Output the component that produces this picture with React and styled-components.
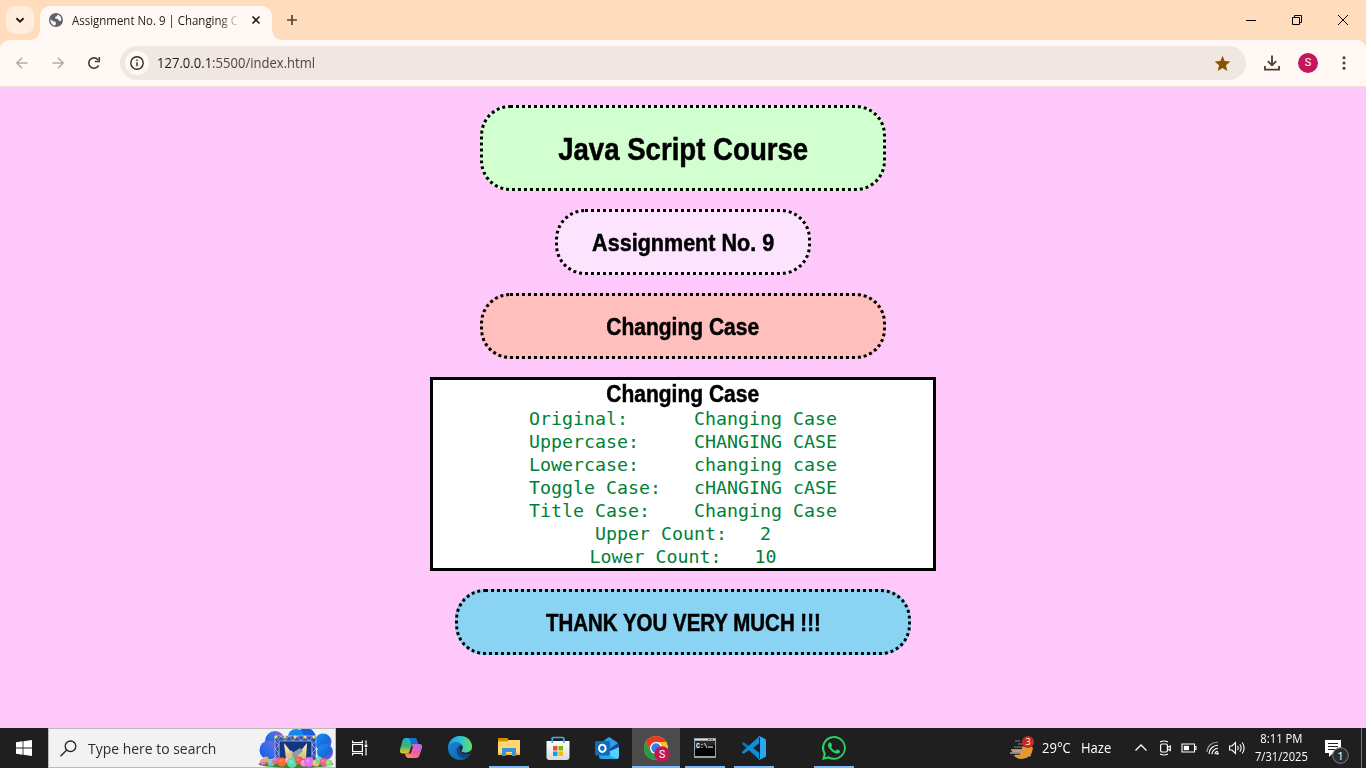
import React from "react";
import styled, { createGlobalStyle } from "styled-components";

const Global = createGlobalStyle`
  *, *::before, *::after { box-sizing: border-box; }
  html, body { margin: 0; padding: 0; overflow: hidden; }
  body { font-family: "Open Sans", "Noto Sans", sans-serif; }
  svg { display: block; flex: none; }
`;

const ui = '"Open Sans", "Noto Sans", sans-serif';

const Screen = styled.div`
  width: 1366px;
  height: 768px;
  display: flex;
  flex-direction: column;
  background: #ffc8fb;
`;

const Fit = styled.span`
  display: inline-block;
  white-space: pre;
  transform: scaleX(${(p) => p.$x || 1});
  transform-origin: ${(p) => p.$origin || "left"} center;
`;

/* ---------- browser window ---------- */
const TitleBar = styled.header`
  height: 40px;
  flex: none;
  display: flex;
  background: #ffdcbc;
  padding: 6px 0 0 6px;
`;

const TabSearch = styled.div`
  width: 28px;
  height: 28px;
  border-radius: 10px;
  background: #ffeddf;
  display: flex;
  align-items: center;
  justify-content: center;
`;

const Tab = styled.div`
  position: relative;
  width: 232px;
  height: 34px;
  margin-left: 6px;
  padding: 0 9px 6px 9px;
  display: flex;
  align-items: center;
  background: #fff8f5;
  border-radius: 10px 10px 0 0;
  &::before, &::after {
    content: "";
    position: absolute;
    bottom: 0;
    width: 10px;
    height: 10px;
  }
  &::before {
    left: -10px;
    background: radial-gradient(circle at 0 0, transparent 9.5px, #fff8f5 10px);
  }
  &::after {
    right: -10px;
    background: radial-gradient(circle at 100% 0, transparent 9.5px, #fff8f5 10px);
  }
`;

const TabTitle = styled.div`
  width: 167px;
  margin: 1px 0 0 9px;
  overflow: hidden;
  white-space: nowrap;
  font: 12px/18px ${ui};
  color: #251a12;
  mask-image: linear-gradient(to right, #000 147px, transparent 168px);
`;

const TabClose = styled.div`
  margin-left: auto;
  width: 14px;
  display: flex;
  justify-content: center;
`;

const NewTab = styled.div`
  width: 28px;
  height: 28px;
  margin-left: 6px;
  display: flex;
  align-items: center;
  justify-content: center;
`;

const WindowButtons = styled.div`
  margin: -6px 0 0 auto;
  display: flex;
`;

const WindowButton = styled.div`
  width: 46px;
  height: 40px;
  display: flex;
  align-items: center;
  justify-content: center;
`;

const ToolbarBack = styled.div`
  flex: none;
  background: #ffdcbc;
`;

const Toolbar = styled.div`
  height: 47px;
  display: flex;
  align-items: center;
  background: #fff8f5;
  border-radius: 9px 9px 0 0;
  border-bottom: 1px solid #f5dfd4;
  padding: 0 4px;
`;

const ToolButton = styled.div`
  width: 36px;
  height: 36px;
  display: flex;
  align-items: center;
  justify-content: center;
`;

const AddressBar = styled.div`
  flex: 1;
  height: 34px;
  margin: 0 8px 0 8px;
  border-radius: 17px;
  background: #f0e7e2;
  padding: 0 15px 0 5px;
  display: flex;
  align-items: center;
`;

const SiteInfo = styled.div`
  width: 24px;
  height: 24px;
  border-radius: 50%;
  background: #fff8f5;
  display: flex;
  align-items: center;
  justify-content: center;
`;

const Url = styled.div`
  margin-left: 8px;
  flex: 1;
  font: 14px/20px ${ui};
  color: #51443b;
  b { font-weight: 400; color: #201a17; }
`;

const Avatar = styled.div`
  width: 20px;
  height: 20px;
  border-radius: 50%;
  background: #c2185b;
  color: #fff;
  font: 11px/20px Roboto, sans-serif;
  text-align: center;
`;

/* ---------- web page ---------- */
const Page = styled.main`
  flex: 1;
  display: flex;
  flex-direction: column;
  align-items: center;
  gap: 18px;
  padding-top: 18px;
  background: #ffc8fb;
`;

const Pill = styled.div`
  width: ${(p) => p.$w}px;
  height: ${(p) => p.$h || 66}px;
  border: 3px dotted #000;
  border-radius: 30px;
  background: ${(p) => p.$bg};
  display: flex;
  align-items: center;
  justify-content: center;
`;

const Heading = styled.h2`
  margin: 0;
  padding-top: 2px;
  color: #000;
  font: bold ${(p) => p.$size || 23}px/25px "Liberation Sans", Arial, sans-serif;
  -webkit-text-stroke: 0.5px #000;
  text-align: center;
`;

const ResultBox = styled.section`
  width: 506px;
  height: 194px;
  border: 3px solid #000;
  background: #fff;
`;

const Results = styled.pre`
  margin: 0;
  text-align: center;
  color: #008037;
  font: 18.27px/23px "DejaVu Sans Mono", monospace;
`;

/* ---------- taskbar ---------- */
const Taskbar = styled.footer`
  height: 40px;
  flex: none;
  display: flex;
  background: #1f1f1f;
  color: #fff;
`;

const TaskButton = styled.div`
  position: relative;
  width: 48px;
  height: 40px;
  margin-left: ${(p) => p.$gap || 0}px;
  display: flex;
  align-items: center;
  justify-content: center;
  background: ${(p) => (p.$active ? "#4b4b4b" : "transparent")};
  &::after {
    content: "";
    position: absolute;
    left: ${(p) => (p.$active ? 0 : 4)}px;
    right: ${(p) => (p.$active ? 0 : 4)}px;
    bottom: 0;
    height: 2px;
    background: ${(p) => (p.$open || p.$active ? "#76b9ff" : "transparent")};
  }
`;

const SearchBox = styled.div`
  width: 288px;
  height: 40px;
  border: 1px solid #b8bcb8;
  background: #f2f2f2;
  display: flex;
  align-items: center;
  padding-left: 11px;
`;

const SearchText = styled.div`
  margin-left: 11px;
  width: 170px;
  color: #2c2c2c;
  font: 15px/20px ${ui};
`;

const Weather = styled.div`
  width: 119px;
  margin-left: auto;
  display: flex;
  align-items: center;
`;

const WeatherText = styled.div`
  width: ${(p) => p.$w}px;
  margin-left: ${(p) => p.$gap}px;
  font: 14px/20px ${ui};
`;

const TrayItem = styled.div`
  width: 24px;
  display: flex;
  align-items: center;
  justify-content: center;
`;

const Clock = styled.div`
  width: 64px;
  display: flex;
  flex-direction: column;
  align-items: center;
  padding-top: 2px;
  font: 12px/18px ${ui};
`;

const Notifications = styled.div`
  width: 48px;
  padding: 5px 0 0 11px;
  display: flex;
  align-items: center;
`;

const ShowDesktop = styled.div`
  width: 5px;
  border-left: 1px solid #7a7a7a;
`;

/* ---------- icons ---------- */
const Line = ({ w = 16, h = w, box, color, sw = 1.5, children }) => (
  <svg width={w} height={h} viewBox={box || `0 0 ${w} ${h}`} fill="none" stroke={color} strokeWidth={sw}>
    {children}
  </svg>
);

const GlobeIcon = () => (
  <svg width="14" height="14" viewBox="0 0 14 14">
    <circle cx="7" cy="7" r="7" fill="#5f6368" />
    <path d="M1.5 6.2 4.6 8.6 6.6 8.7 6.9 10.6 6.1 12.6C3.3 12.2 1.2 9.6 1.5 6.2ZM8.3 1.6 8.2 3.2 6.4 3.7 6 5.3 7.2 5.8 9 5.9 9.7 7.6 11 8.2 12.4 7.2C12.6 4.4 10.8 2 8.3 1.6Z" fill="#fff8f5" />
  </svg>
);

const StartIcon = () => (
  <svg width="16" height="16" viewBox="0 0 16 16" fill="#fff">
    <path d="M0 2.2 6.6 1.3V7.6H0ZM7.4 1.2 16 0V7.6H7.4ZM0 8.4H6.6V14.7L0 13.8ZM7.4 8.4H16V16L7.4 14.8Z" />
  </svg>
);

const balloons = [
  [5, 33, 3, "#e27ab7"], [8, 30.500, 3, "#f5a15d"], [13, 34, 3.500, "#6cc8b8"], [18, 31.500, 3.500, "#ee5f9e"],
  [24, 33, 4.500, "#ff6a2e"], [30, 31, 3, "#f7a1cb"], [34, 34, 5, "#54dfa4"], [41, 31.500, 4, "#f9564b"],
  [46, 34, 3.500, "#ff8bd7"], [51, 33, 5, "#e56cf2"], [58, 34, 3.500, "#ffb56a"], [61, 31, 3.500, "#66d89d"],
  [66, 33, 4, "#f55c8a"], [71, 34, 3.500, "#8fdc80"],
];

const StageArt = () => (
  <svg width="76" height="39" viewBox="0 0 76 39">
    <defs>
      <linearGradient id="puff" x1="0" y1="1" x2="1" y2="0">
        <stop offset="0" stopColor="#0b58e8" />
        <stop offset=".6" stopColor="#3f70e8" />
        <stop offset="1" stopColor="#c44fc2" />
      </linearGradient>
      <linearGradient id="puff2" x1="0" y1="0" x2="1" y2="1">
        <stop offset="0" stopColor="#1497f5" />
        <stop offset=".6" stopColor="#1768dd" />
        <stop offset="1" stopColor="#b34dc8" />
      </linearGradient>
      <linearGradient id="beam" x1="0" y1="0" x2="0" y2="1">
        <stop offset="0" stopColor="#fff7cf" />
        <stop offset="1" stopColor="#d6b668" />
      </linearGradient>
    </defs>
    <ellipse cx="38" cy="35" rx="37.500" ry="4" fill="#4e7b36" />
    <circle cx="17" cy="12" r="10" fill="url(#puff)" />
    <circle cx="11" cy="21" r="9.500" fill="url(#puff)" />
    <circle cx="48" cy="9" r="10" fill="#125fe0" />
    <circle cx="38" cy="8" r="8" fill="#1389ee" />
    <circle cx="65" cy="13" r="8.500" fill="url(#puff2)" />
    <circle cx="67" cy="23" r="8" fill="url(#puff2)" />
    <path d="M17 7H58V31H17Z" fill="#2d51a8" />
    <path d="M22 12H53V30H22Z" fill="#16357f" />
    <g stroke="#b5c6f5" strokeWidth=".7" fill="none">
      <path d="M17 7H58M21 12H54M17 7V30M21 12V30M58 7V30M54 12V30" />
      <path d="m17 12 4 4-4 4 4 4-4 4M58 12l-4 4 4 4-4 4 4 4M19 12l4-5 4 5 4-5 4 5 4-5 4 5 4-5 4 5 4-5" />
    </g>
    <path d="m26 14 8 10-3 6h-3ZM49 14l-8 10 3 6h4Z" fill="url(#beam)" />
    <path d="m30 30 3-9 5 5 5-5 3 9Z" fill="#d5c58c" />
    <path d="m34 24 8-5 3 3-5 4-1 4h-4Z" fill="#929ba0" />
    <g fill="#ffd65c">
      {[18, 27, 37, 47, 56].map((x) => <circle key={x} cx={x} cy="8" r="1.6" />)}
    </g>
    {balloons.map(([x, y, r, c]) => (
      <g key={x}>
        <circle cx={x} cy={y} r={r} fill={c} />
        <circle cx={x - 1} cy={y - 1} r={r / 2.5} fill="#fff" opacity=".25" />
      </g>
    ))}
  </svg>
);

const CopilotIcon = () => (
  <svg width="24" height="24" viewBox="0 0 24 24">
    <defs>
      <linearGradient id="cpA" x1="0" y1="0" x2="0" y2="1">
        <stop offset="0" stopColor="#27a9e8" />
        <stop offset=".5" stopColor="#36b36f" />
        <stop offset="1" stopColor="#f2c722" />
      </linearGradient>
      <linearGradient id="cpB" x1=".8" y1="0" x2="0" y2="1">
        <stop offset="0" stopColor="#b06cf2" />
        <stop offset=".5" stopColor="#f0609b" />
        <stop offset="1" stopColor="#fc9a56" />
      </linearGradient>
    </defs>
    <path d="M7 2h8c2 0 2.600 1.300 3.200 3.200L19 8h-4c-1.600 0-2.200.8-2.700 2.300L10.800 15c-.6 1.600-1.300 2.400-3 2.400H3.500c-2.500 0-3-2-2.400-4.200l2.200-8C3.900 3 5 2 7 2Z" fill="url(#cpA)" />
    <path d="M8 2h7c2 0 2.600 1.300 3.200 3.200L19 8h-4c-1.200 0-1.900.4-2.400 1.400L11.300 5C10.700 3 9.800 2 8 2Z" fill="#1470cf" />
    <path d="M17 22H9.500c-2 0-2.700-1.300-3.200-3.200l-.5-1.400h2c1.700 0 2.500-.8 3-2.400l1.500-4.700C12.800 8.800 13.400 8 15 8h5.500c2.500 0 3 2 2.400 4.200l-2.200 6.600C20 21 19 22 17 22Z" fill="url(#cpB)" />
    <path d="m12.300 10.300-2 6.300c-.3.700-.6.900-1.300.9h2.800l2.300-7.300Z" fill="#24202a" />
  </svg>
);

const EdgeIcon = () => (
  <svg width="24" height="24" viewBox="0 0 24 24">
    <defs>
      <linearGradient id="edA" x1="0" y1=".4" x2="1" y2=".4">
        <stop offset="0" stopColor="#1c9de0" />
        <stop offset=".5" stopColor="#2fc1d4" />
        <stop offset="1" stopColor="#66df5c" />
      </linearGradient>
      <linearGradient id="edB" x1="0" y1="0" x2="1" y2="1">
        <stop offset="0" stopColor="#1b8bdc" />
        <stop offset="1" stopColor="#0c59a4" />
      </linearGradient>
    </defs>
    <circle cx="12" cy="12" r="12" fill="url(#edB)" />
    <path d="M.3 10.500C1.200 4.500 6.200 0 12.200 0 19 0 24 4.800 24 10.400c0 3.900-3 6.300-6.300 6.300-3 0-4.700-1.200-4.500-2 .1-.5 1.400-1 1.400-3.100C14.600 8.500 11.700 6 7.900 6 4.500 6 1.700 7.700.3 10.500Z" fill="url(#edA)" />
    <path d="M13.200 14.700c-.2-.5 1.400-1 1.400-3.100 0-1-.4-2-1-2.800C10.600 9.200 8.600 11.700 8.700 14.800c.1 4.300 4.100 7.700 8.300 7.200 2.300-.9 4.200-2.400 5.500-4.600-1 .5-2.400.9-4 .9-3 0-5-1.400-5.300-3.600Z" fill="#14457f" />
    <path d="M13.200 14.700c-.2-.5 1.400-1 1.400-3.100 0-.8-.3-1.500-.6-2.100-1.500.5-2.400 2-2.100 3.800.6 3.200 3.600 5.300 7.300 5 1.600-.1 2.900-.6 3.600-1.300l1-3.400c-1.400 1.900-3.500 3.100-6.100 3.100-3 0-4.700-1.200-4.500-2Z" fill="#1f1f1f" />
  </svg>
);

const ExplorerIcon = () => (
  <svg width="22" height="20" viewBox="0 0 22 20">
    <path d="M0 2V1Q0 0 1 0H9L10.500 2H21Q22 2 22 3V17H0Z" fill="#f1b739" />
    <path d="M0 1Q0 0 1 0H9L10.300 2 9 3H0Z" fill="#d38c00" />
    <path d="M0 5 1 4H9L11 2H21Q22 2 22 3V17H0Z" fill="#ffd873" />
    <path d="M4 10.500Q4 10 5 10H17Q18 10 18 11V18H14V14H8V18H4Z" fill="#3c92d8" />
    <path d="M0 15H4V17H0ZM18 15H22V17H18ZM8 15H14V17H8Z" fill="#f5bd3d" />
  </svg>
);

const StoreIcon = () => (
  <svg width="24" height="24" viewBox="0 0 24 24">
    <defs>
      <linearGradient id="bag" x1="0" y1="0" x2="0" y2="1">
        <stop offset="0" stopColor="#fff" />
        <stop offset="1" stopColor="#d8d9da" />
      </linearGradient>
    </defs>
    <path d="M.5 5H23.500V21Q23.500 24 20.500 24H3.500Q.5 24 .5 21Z" fill="url(#bag)" />
    <path d="M6.200 7V2.500Q6.200 1.500 7.200 1.500H16.800Q17.800 1.500 17.800 2.500V7" fill="none" stroke="#2eb2ed" strokeWidth="1.700" />
    <path d="M7 10H11.500V14.500H7Z" fill="#f25022" /><path d="M12.500 10H17V14.500H12.500Z" fill="#7fba00" />
    <path d="M7 15.500H11.500V20H7Z" fill="#00a4ef" /><path d="M12.500 15.500H17V20H12.500Z" fill="#ffb900" />
  </svg>
);

const OutlookIcon = () => (
  <svg width="24" height="24" viewBox="0 0 24 24">
    <path d="M4 8 14 1.500 24 8V20Q24 23 21 23H7Q4 23 4 20Z" fill="#125fb6" />
    <path d="M6 7 13 1.500Q14 1 15 1.500L23 7 14 13Z" fill="#2d9fe8" />
    <path d="M23 7 12 16V20L24 12V8Z" fill="#1747a0" />
    <path d="M24 11V20Q24 23 21 23H8L11 17Z" fill="#55d0fa" />
    <path d="M5 15 22 23H7Q4 23 4 20Z" fill="#2aa7ed" />
    <rect x="0" y="5" width="15" height="14.500" rx="1.500" fill="#0f6cbd" />
    <ellipse cx="7.300" cy="12.300" rx="3.300" ry="3.600" fill="none" stroke="#fff" strokeWidth="2" />
  </svg>
);

const ChromeIcon = () => (
  <svg width="24" height="24" viewBox="0 2 24 24" overflow="visible">
    <circle cx="12" cy="14" r="12" fill="#fbc21b" />
    <path d="M1.600 8A12 12 0 0 1 22.400 8H12L6.800 17Z" fill="#e53c2f" />
    <path d="M1.600 8 6.800 17Q9 20 12 20L17.200 17 12 26A12 12 0 0 1 1.600 8Z" fill="#269a48" />
    <circle cx="12" cy="14" r="6" fill="#fff" />
    <circle cx="12" cy="14" r="4.700" fill="#347ce8" />
    <circle cx="18" cy="20" r="7.800" fill="#c2185b" />
    <text x="18" y="23.800" textAnchor="middle" fill="#fff" fontFamily="Roboto, sans-serif" fontSize="10.500">S</text>
  </svg>
);

const TerminalIcon = () => (
  <svg width="22" height="20" viewBox="0 0 22 20">
    <path d="M0 0H22V20H0Z" fill="#9aa0a4" />
    <path d="M1 1H21V2H1Z" fill="#dce3e8" />
    <path d="M14 1H16V2H14ZM17 1H19V2H17Z" fill="#59636d" />
    <path d="M1 3H21V18H1Z" fill="#050505" />
    <path d="M1 3H21V7Q10 7 1 12Z" fill="#292929" />
    <text x="2" y="9.500" fill="#fff" fontFamily="Liberation Mono, monospace" fontWeight="bold" fontSize="6.500">C:\</text>
    <path d="M14 9H19" stroke="#fff" />
  </svg>
);

const CodeIcon = () => (
  <svg width="24" height="24" viewBox="0 0 24 24">
    <path d="M17 0 7.200 9.300 2.100 5.400Q1.500 5 .9 5.500L.3 6.200Q-.3 6.800.3 7.300L17 22.500Z" fill="#0877b9" transform="translate(0 1)" />
    <path d="M17 24 7.200 14.700 2.100 18.600Q1.500 19 .9 18.500L.3 17.800Q-.3 17.200.3 16.700L17 1.500Z" fill="#0d8edb" transform="translate(0 -1)" />
    <path d="M17 0 22.800 2.700Q24 3.300 24 4.600V19.400Q24 20.700 22.800 21.300L17 24 16.700 23.800 18 22V2L16.500.3Z" fill="#27a9f2" />
    <path d="M18 6.700V17.300L11 12Z" fill="#1f1f1f" />
  </svg>
);

const WhatsAppIcon = () => (
  <svg width="24" height="24" viewBox="0 0 24 24" fill="#25d366">
    <path d="M17.472 14.382c-.297-.149-1.758-.867-2.030-.967-.273-.099-.471-.148-.67.150-.197.297-.767.966-.940 1.164-.173.199-.347.223-.644.075-.297-.150-1.255-.463-2.390-1.475-.883-.788-1.480-1.761-1.653-2.059-.173-.297-.018-.458.130-.606.134-.133.298-.347.446-.520.149-.174.198-.298.298-.497.099-.198.050-.371-.025-.520-.075-.149-.669-1.612-.916-2.207-.242-.579-.487-.500-.669-.510-.173-.008-.371-.010-.570-.010-.198 0-.520.074-.792.372-.272.297-1.040 1.016-1.040 2.479 0 1.462 1.065 2.875 1.213 3.074.149.198 2.096 3.200 5.077 4.487.709.306 1.262.489 1.694.625.712.227 1.360.195 1.871.118.571-.085 1.758-.719 2.006-1.413.248-.694.248-1.289.173-1.413-.074-.124-.272-.198-.570-.347" />
    <path d="M12 0A11.900 11.900 0 0 0 1.700 17.900L.1 24l6.200-1.600A11.900 11.900 0 1 0 12 0Zm0 21.800a9.800 9.800 0 0 1-5-1.400l-.4-.2-3.700 1 1-3.600-.2-.4A9.900 9.900 0 1 1 12 21.800Z" />
  </svg>
);

const WeatherIcon = () => (
  <svg width="25" height="26" viewBox="0 0 25 26">
    <path d="M1.500 14.500H12V11.500H21.500L23 13Q22.500 18 19.500 21Q16 24 12 24Q7 24 3.500 20.500H10V17.500H2.500Z" fill="#eb9720" />
    <path d="M5 6H10M8 9H14M4 12H12" stroke="#636568" strokeWidth="1.500" />
    <path d="M1 15H15M0 18H12M5 20.500H21" stroke="#a7a39c" strokeWidth="1.500" />
    <circle cx="18" cy="7" r="6.100" fill="#c42b1c" />
    <text x="18" y="10.300" textAnchor="middle" fill="#fff" fontFamily="Open Sans, sans-serif" fontSize="9">3</text>
  </svg>
);

const NoticeIcon = () => (
  <svg width="26" height="26" viewBox="0 0 26 26">
    <path d="M1 2H17V15H9L5 19V15H1Z" fill="#fff" />
    <path d="M4 5.500H14M4 8.500H14M4 11.500H11" stroke="#1f1f1f" />
    <circle cx="16.500" cy="17.500" r="7.800" fill="#2c2c2c" stroke="#858585" />
    <text x="16.500" y="21.700" textAnchor="middle" fill="#fff" fontFamily="Open Sans, sans-serif" fontSize="11.500">1</text>
  </svg>
);

const report = [
  "Original:      Changing Case",
  "Uppercase:     CHANGING CASE",
  "Lowercase:     changing case",
  "Toggle Case:   cHANGING cASE",
  "Title Case:    Changing Case",
  "Upper Count:   2",
  "Lower Count:   10",
].join("\n");

const Browser = () => (
  <>
    <TitleBar>
      <TabSearch>
        <Line w={12} color="#2a170b" sw={1.9}><path d="m2.400 4.300 3.600 3.500 3.600-3.500" /></Line>
      </TabSearch>
      <Tab>
        <GlobeIcon />
        <TabTitle><Fit $x={0.955}>Assignment No. 9 | Changing Ca</Fit></TabTitle>
        <TabClose>
          <Line w={10} color="#2a1c12" sw={1.6}><path d="m1.500 1.500 7 7M8.500 1.500 1.500 8.500" /></Line>
        </TabClose>
      </Tab>
      <NewTab>
        <Line w={12} color="#574331" sw={1.7}><path d="M6 1V11M1 6H11" /></Line>
      </NewTab>
      <WindowButtons>
        <WindowButton><Line w={10} color="#000" sw={1}><path d="M0 5.500H10" /></Line></WindowButton>
        <WindowButton><Line w={10} color="#000" sw={1}><path d="M.5 2.500H7.500V9.500H.5ZM2.500 2.500V.5H9.500V7.500H7.500" /></Line></WindowButton>
        <WindowButton><Line w={10} color="#000" sw={1}><path d="m0 0 10 10M10 0 0 10" /></Line></WindowButton>
      </WindowButtons>
    </TitleBar>
    <ToolbarBack>
      <Toolbar>
        <ToolButton><Line w={14} color="#b6aaa3" sw={1.5}><path d="M12.500 7H2M7 1.800 1.800 7 7 12.200" /></Line></ToolButton>
        <ToolButton><Line w={14} color="#b6aaa3" sw={1.5}><path d="M1.500 7H12M7 1.800 12.200 7 7 12.200" /></Line></ToolButton>
        <ToolButton>
          <Line w={14} color="#4f3c2b" sw={1.6}>
            <path d="M11.600 9.400A5.200 5.200 0 1 1 11.200 4" /><path d="M12.300 1V5.500H7.800" />
          </Line>
        </ToolButton>
        <AddressBar>
          <SiteInfo>
            <Line w={14} color="#352820" sw={1.4}>
              <circle cx="7" cy="7" r="6.200" /><path d="M7 6.200V10.300M7 3.500V5" />
            </Line>
          </SiteInfo>
          <Url><Fit $x={0.933}><b>127.0.0.1</b>:5500/index.html</Fit></Url>
          <svg width="17" height="17" viewBox="0 0 24 24" fill="#885200">
            <path d="M12 18.200 18.700 22.500 16.900 14.600 23 9.300 15 8.600 12 1.200 9 8.600 1 9.300 7.100 14.600 5.300 22.500Z" />
          </svg>
        </AddressBar>
        <ToolButton>
          <Line w={16} color="#4f3c2b" sw={1.8}><path d="M8 .5V10M3.800 6.200 8 10.300 12.200 6.200M.9 11V14.600H15.100V11" /></Line>
        </ToolButton>
        <ToolButton><Avatar>S</Avatar></ToolButton>
        <ToolButton>
          <svg width="4" height="16" viewBox="0 0 4 16" fill="#4f3c2b">
            <circle cx="2" cy="2.700" r="1.500" /><circle cx="2" cy="8" r="1.500" /><circle cx="2" cy="13.300" r="1.500" />
          </svg>
        </ToolButton>
      </Toolbar>
    </ToolbarBack>
  </>
);

const WindowsBar = () => (
  <Taskbar>
    <TaskButton><StartIcon /></TaskButton>
    <SearchBox>
      <Line w={17} color="#222" sw={1.3}><circle cx="10.500" cy="6.300" r="5.300" /><path d="M6.700 10 .5 16.300" /></Line>
      <SearchText><Fit $x={0.93}>Type here to search</Fit></SearchText>
      <StageArt />
    </SearchBox>
    <TaskButton>
      <Line w={16} color="#fff" sw={1.2}>
        <path d="M.6.500V2.600H10.400V.5M.6 4.500H10.400V11.500H.6ZM.6 15.500V13.400H10.400V15.500M14 .5V3.800M14 8V15.500" />
        <path d="M12.700 4.500H15.300V7.100H12.700Z" fill="#fff" stroke="none" />
      </Line>
    </TaskButton>
    <TaskButton $gap={3}><CopilotIcon /></TaskButton>
    <TaskButton $gap={1}><EdgeIcon /></TaskButton>
    <TaskButton $gap={1} $open><ExplorerIcon /></TaskButton>
    <TaskButton $gap={1}><StoreIcon /></TaskButton>
    <TaskButton $gap={1}><OutlookIcon /></TaskButton>
    <TaskButton $gap={1} $active><ChromeIcon /></TaskButton>
    <TaskButton $gap={1} $open><TerminalIcon /></TaskButton>
    <TaskButton $gap={1} $open><CodeIcon /></TaskButton>
    <TaskButton $gap={32} $open><WhatsAppIcon /></TaskButton>
    <Weather>
      <WeatherIcon />
      <WeatherText $w={29} $gap={7}><Fit $x={0.93}>29°C</Fit></WeatherText>
      <WeatherText $w={30} $gap={10}><Fit $x={0.93}>Haze</Fit></WeatherText>
    </Weather>
    <TrayItem><Line w={12} color="#fff" sw={1.3}><path d="M.5 8.500 6 3 11.500 8.500" /></Line></TrayItem>
    <TrayItem>
      <Line w={12} h={16} color="#fff" sw={1.2}>
        <rect x="1.600" y="4" width="6.800" height="8" rx="1.500" /><path d="M8.500 7.500 11.300 6V10.500L8.500 9M1 2Q5 0 9 2M1 14Q5 16 9 14" />
      </Line>
    </TrayItem>
    <TrayItem>
      <Line w={16} h={10} color="#fff" sw={1.1}>
        <path d="M1 1H13.500V9H1ZM13.500 3.500H15V6.500H13.500" /><path d="M2.800 2.800H8V7.200H2.800Z" fill="#fff" stroke="none" />
      </Line>
    </TrayItem>
    <TrayItem>
      <Line w={14} color="#fff" sw={1.1}>
        <path d="M1 11A10 10 0 0 1 12 1.300" stroke="#999" /><path d="M3 13A9 9 0 0 1 12 4.200M6 13.300A6 6 0 0 1 12 7.300M9 13.300A3 3 0 0 1 12 10.300" />
        <circle cx="11.500" cy="12.500" r="1.200" fill="#fff" stroke="none" />
      </Line>
    </TrayItem>
    <TrayItem>
      <Line w={17} h={14} color="#fff" sw={1.1}>
        <path d="M.6 5H3L6.500 1.500V12.500L3 9H.6ZM8.500 5Q10 7 8.500 9M10.800 3.300Q13.500 7 10.800 10.700M13.200 1.500Q17 7 13.200 12.500" />
      </Line>
    </TrayItem>
    <Clock>
      <Fit $x={0.94} $origin="center">8:11 PM</Fit>
      <Fit $x={0.93} $origin="center">7/31/2025</Fit>
    </Clock>
    <Notifications><NoticeIcon /></Notifications>
    <ShowDesktop />
  </Taskbar>
);

export default function App() {
  return (
    <Screen>
      <Global />
      <Browser />
      <Page>
        <Pill $w={406} $h={86} $bg="#d2ffd0"><Heading as="h1" $size={30.5}><Fit $x={0.905} $origin="center">Java Script Course</Fit></Heading></Pill>
        <Pill $w={256} $bg="#fce4ff"><Heading><Fit $x={0.937} $origin="center">Assignment No. 9</Fit></Heading></Pill>
        <Pill $w={406} $bg="#ffbfbd"><Heading><Fit $x={0.912} $origin="center">Changing Case</Fit></Heading></Pill>
        <ResultBox>
          <Heading><Fit $x={0.912} $origin="center">Changing Case</Fit></Heading>
          <Results>{report}</Results>
        </ResultBox>
        <Pill $w={456} $bg="#8bd3f2"><Heading><Fit $x={0.89} $origin="center">THANK YOU VERY MUCH !!!</Fit></Heading></Pill>
      </Page>
      <WindowsBar />
    </Screen>
  );
}
